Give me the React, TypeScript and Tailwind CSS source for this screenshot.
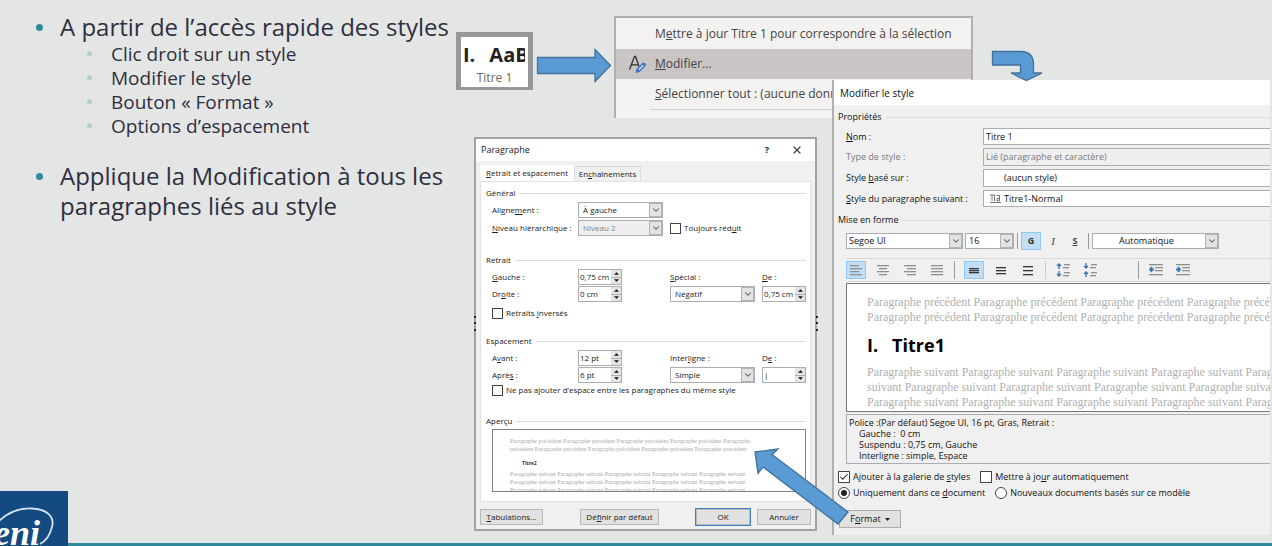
import React, { useState } from "react";
import { Check, ChevronDown, X } from "lucide-react";

const sans = "font-['Open_Sans','Noto_Sans',sans-serif]";

function BlockArrow({ className, viewBox, d }: { className: string; viewBox: string; d: string }) {
  return (
    <svg aria-hidden="true" className={className} viewBox={viewBox}>
      <path d={d} fill="#5b9bd5" stroke="#41719c" strokeWidth="1.3" />
    </svg>
  );
}

function Group({ title, children, className = "" }: { title: string; children?: React.ReactNode; className?: string }) {
  return (
    <section className={className}>
      <div className="flex h-4 items-center gap-1">
        <h3>{title}</h3>
        <span className="h-px flex-1 bg-[#dcdcdc]" />
      </div>
      {children}
    </section>
  );
}

function Select({
  id,
  value,
  label,
  disabled,
  className = "",
  pad = "pl-1",
}: {
  id: string;
  value: string;
  label?: string;
  disabled?: boolean;
  className?: string;
  pad?: string;
}) {
  return (
    <span className={`relative flex h-4 border border-[#abadb3] ${disabled ? "bg-[#efefef] text-[#838383]" : "bg-white"} ${className}`}>
      <select id={id} aria-label={label} disabled={disabled} defaultValue={value} className={`w-full appearance-none bg-transparent ${pad}`}>
        <option>{value}</option>
      </select>
      <span className="pointer-events-none absolute inset-y-0 right-0 flex w-[13px] items-center justify-center border border-[#b4b4b4] bg-[#e3e3e3]">
        <ChevronDown className="size-[10px] text-[#555]" strokeWidth={2.5} />
      </span>
    </span>
  );
}

function Spinner({ id, value }: { id: string; value: string }) {
  return (
    <span className="flex h-4 w-11 border border-[#abadb3] bg-white">
      <input id={id} defaultValue={value} className="w-full min-w-0 flex-1 bg-transparent pl-px" />
      <span className="flex w-[10px] flex-col bg-[#e3e3e3]">
        <button type="button" aria-label="+" className="flex flex-1 items-center justify-center border-b border-[#abadb3]">
          <svg className="h-[3px] w-[5px]" viewBox="0 0 6 3"><path d="M0 3 3 0l3 3z" fill="#111" /></svg>
        </button>
        <button type="button" aria-label="-" className="flex flex-1 items-center justify-center">
          <svg className="h-[3px] w-[5px]" viewBox="0 0 6 3"><path d="M0 0h6L3 3z" fill="#111" /></svg>
        </button>
      </span>
    </span>
  );
}

function Tick({ children, type = "checkbox", name, checked = false, size = "size-[11px]" }: {
  children: React.ReactNode;
  type?: "checkbox" | "radio";
  name?: string;
  checked?: boolean;
  size?: string;
}) {
  const round = type === "radio";
  return (
    <label className="flex items-center gap-[3px] whitespace-nowrap">
      <span className={`relative flex shrink-0 items-center justify-center ${size}`}>
        <input
          type={type}
          name={name}
          defaultChecked={checked}
          className={`peer absolute inset-0 size-full appearance-none border border-[#444] bg-white ${round ? "rounded-full" : ""}`}
        />
        {round ? (
          <span className="pointer-events-none relative hidden size-[6px] rounded-full bg-[#222] peer-checked:block" />
        ) : (
          <Check className="pointer-events-none relative hidden size-[10px] text-[#222] peer-checked:block" strokeWidth={2.5} />
        )}
      </span>
      <span>{children}</span>
    </label>
  );
}

function SlideText() {
  return (
    <ul className="w-[450px] pt-3 pl-[60px] text-2xl/[30px] text-[#2f2f40]">
      <li className="relative whitespace-nowrap">
        <span className="absolute -left-6 top-3 size-[7px] rounded-full bg-[#2f8a9c]" />
        A partir de l’accès rapide des styles
        <ul className="pl-[51px] text-[19px]/6">
          {["Clic droit sur un style", "Modifier le style", "Bouton « Format »", "Options d’espacement"].map((t) => (
            <li key={t} className="relative">
              <span className="absolute -left-6 top-[9px] size-[5px] rounded-full bg-[#a9d0cf]" />
              {t}
            </li>
          ))}
        </ul>
      </li>
      <li className="relative mt-[23px] whitespace-nowrap">
        <span className="absolute -left-6 top-3 size-[7px] rounded-full bg-[#2f8a9c]" />
        Applique la Modification à tous les
        <br />
        paragraphes liés au style
      </li>
    </ul>
  );
}

function StyleTile() {
  return (
    <button type="button" className="absolute left-[456px] top-8 flex h-[58px] w-[77px] flex-col border-[5px] border-b-[3px] border-[#979899] bg-white pl-[2px] text-left">
      <span className="mt-1 flex w-[62px] gap-[14px] overflow-hidden text-[20px]/[28px] font-bold text-[#222]">
        <span>I.</span>
        <span>AaB</span>
      </span>
      <span className="w-full pr-[2px] text-center text-xs/[18px] text-[#666]">Titre 1</span>
    </button>
  );
}

function ContextMenu() {
  return (
    <div role="menu" className="absolute left-[614px] top-4 w-[359px] border-2 border-b-0 border-[#b1b0af] bg-[#f3f2f1] text-xs text-[#444]">
      <button role="menuitem" type="button" className="flex h-[31px] w-full items-center pl-[39px] whitespace-nowrap">
        <span>M<u>e</u>ttre à jour Titre 1 pour correspondre à la sélection</span>
      </button>
      <button role="menuitem" type="button" className="flex h-[30px] w-full items-center bg-[#c8c5c4] pl-3 whitespace-nowrap">
        <svg aria-hidden="true" className="mr-2 size-[19px]" viewBox="0 0 19 19">
          <path d="M1.5 14.500 6.500 1.500h1l3.500 10M3.400 9.800h6.400" fill="none" stroke="#333" strokeWidth="1.3" />
          <path d="m7.500 18 1-4 6.500-6.500q3 0 3 3L11.500 17z" fill="#3f74c4" />
          <path d="m10.800 14.700 4.500-4.500" stroke="#cfe0f7" strokeWidth="1.400" />
        </svg>
        <span><u>M</u>odifier...</span>
      </button>
      <button role="menuitem" type="button" className="flex h-[30px] w-full items-center pl-[39px] whitespace-nowrap">
        <span><u>S</u>électionner tout : (aucune donn</span>
      </button>
      <div className="ml-[34px] h-[9px] border-t border-[#d0cfce]" />
    </div>
  );
}

function FormRow({ label, id, children }: { label: React.ReactNode; id: string; children: React.ReactNode }) {
  return (
    <div className="flex items-center">
      <label htmlFor={id} className="w-[86px] whitespace-nowrap">{label}</label>
      {children}
    </div>
  );
}

function ParagraphDialog() {
  return (
    <div role="dialog" aria-label="Paragraphe" className="absolute left-[474px] top-[137px] w-[343px] border-2 border-[#a0a1a1] bg-[#f0f0f0] text-[8px]/[12px] text-[#222]">
      <header className="flex h-[22px] items-center bg-white pl-[5px] pr-3 text-[9px]">
        <h2 className="flex-1">Paragraphe</h2>
        <button type="button" className="mr-[22px] font-bold">?</button>
        <button type="button" aria-label="Fermer"><X className="size-3 text-[#444]" strokeWidth={2.5} /></button>
      </header>
      <div className="px-1 pb-1">
        <div role="tablist" className="flex h-5 items-end pt-1">
          <button role="tab" aria-selected="true" type="button" className="h-4 w-[94px] bg-white text-center whitespace-nowrap"><u>R</u>etrait et espacement</button>
          <button role="tab" aria-selected="false" type="button" className="h-[15px] w-[67px] border border-b-0 border-[#dcdcdc] text-center leading-3 whitespace-nowrap">En<u>c</u>haînements</button>
        </div>
        <div className="border border-[#e2e2e2] bg-white pt-[3px] pr-1 pb-[9px] pl-[5px]">
          <Group title="Général">
            <div className="flex flex-col gap-[2px] pt-px pl-[6px]">
              <FormRow id="align" label={<>Aligne<u>m</u>ent :</>}><Select id="align" value="À gauche" className="w-[85px]" /></FormRow>
              <FormRow id="niv" label={<><u>N</u>iveau hiérarchique :</>}>
                <Select id="niv" value="Niveau 2" disabled className="mr-[7px] w-[85px]" />
                <Tick>Toujours réd<u>u</u>it</Tick>
              </FormRow>
            </div>
          </Group>
          <Group title="Retrait" className="mt-4">
            <div className="grid grid-cols-[178px_92px_43px] gap-y-px pt-px pl-[6px]">
              <FormRow id="gau" label={<><u>G</u>auche :</>}><Spinner id="gau" value="0,75 cm" /></FormRow>
              <label htmlFor="spe" className="self-center"><u>S</u>pécial :</label>
              <label htmlFor="de1" className="self-center"><u>D</u>e :</label>
              <FormRow id="dro" label={<>Dr<u>o</u>ite :</>}><Spinner id="dro" value="0 cm" /></FormRow>
              <Select id="spe" value="Négatif" className="w-[85px]" />
              <Spinner id="de1" value="0,75 cm" />
            </div>
            <div className="mt-[5px] pl-[6px]"><Tick>Retraits <u>i</u>nversés</Tick></div>
          </Group>
          <Group title="Espacement" className="mt-[14px]">
            <div className="grid grid-cols-[178px_92px_43px] gap-y-px pt-px pl-[6px]">
              <FormRow id="ava" label={<>A<u>v</u>ant :</>}><Spinner id="ava" value="12 pt" /></FormRow>
              <label htmlFor="int" className="self-center">Inter<u>l</u>igne :</label>
              <label htmlFor="de2" className="self-center">D<u>e</u> :</label>
              <FormRow id="apr" label={<>Aprè<u>s</u> :</>}><Spinner id="apr" value="6 pt" /></FormRow>
              <Select id="int" value="Simple" className="w-[85px]" />
              <Spinner id="de2" value="|" />
            </div>
            <div className="mt-px pl-[6px]"><Tick>Ne pas ajouter d’espace entre les paragraphes du même style</Tick></div>
          </Group>
          <Group title="Aperçu" className="mt-[17px]">
            <div className="ml-[6px] h-[63px] overflow-hidden border border-[#808080] pt-[7px] pl-[17px] font-['Liberation_Serif',serif] text-[6px]/[8px] whitespace-nowrap text-[#a8a8a8]">
              <p>Paragraphe précédent Paragraphe précédent Paragraphe précédent Paragraphe précédent Paragraphe</p>
              <p>précédent Paragraphe précédent Paragraphe précédent Paragraphe précédent Paragraphe précédent</p>
              <p className={`mt-[6px] mb-[3px] pl-3 font-bold text-[#333] ${sans} text-[5px]/[8px]`}>Titre2</p>
              {[0, 1, 2].map((n) => (
                <p key={n}>Paragraphe suivant Paragraphe suivant Paragraphe suivant Paragraphe suivant Paragraphe suivant</p>
              ))}
            </div>
          </Group>
        </div>
        <footer className="mt-[7px] flex *:h-4 *:border *:border-[#b9b9b9] *:bg-[#e1e1e1] *:leading-3">
          <button type="button" className="w-[63px]"><u>T</u>abulations...</button>
          <button type="button" className="ml-[37px] w-[79px]">Dé<u>f</u>inir par défaut</button>
          <button type="button" className="ml-auto w-[54px] outline outline-[#3c7fc8]">OK</button>
          <button type="button" className="ml-[7px] w-[54px]">Annuler</button>
        </footer>
      </div>
    </div>
  );
}

function ResizeDots({ className }: { className: string }) {
  return (
    <svg aria-hidden="true" className={className} viewBox="0 0 3 18">
      <path d="M0 2h2M0 8h2M0 15h2" stroke="#222" strokeWidth="2" />
    </svg>
  );
}

type Bar = [number, number, number];

function Lines({ bars, color, children }: { bars: Bar[]; color: string; children?: React.ReactNode }) {
  return (
    <svg aria-hidden="true" className="h-4 w-[14px]" viewBox="0 0 14 16">
      {bars.map(([x, y, w]) => (
        <rect key={`${x}-${y}`} x={x} y={y} width={w} height="1.3" fill={color} />
      ))}
      {children}
    </svg>
  );
}

function IconButton({ label, active, className = "", children }: { label: string; active?: boolean; className?: string; children: React.ReactNode }) {
  return (
    <button
      type="button"
      aria-label={label}
      className={`flex h-[18px] w-5 shrink-0 items-center justify-center border ${active ? "border-[#90c8f6] bg-[#c2def5]" : "border-transparent"} ${className}`}
    >
      {children}
    </button>
  );
}

const grey = "#8f8f8f";
const dark = "#333";
const blue = "#3573b5";

function FieldRow({ id, label, muted, children }: { id: string; label: React.ReactNode; muted?: boolean; children: React.ReactNode }) {
  return (
    <div className={`flex items-center ${muted ? "text-[#7b7b7b]" : ""}`}>
      <label htmlFor={id} className="w-[137px] shrink-0 whitespace-nowrap">{label}</label>
      {children}
    </div>
  );
}

const box = "flex-1 min-w-0 border border-r-0 border-[#abadb3]";

function StyleDialog() {
  const [name, setName] = useState("Titre 1");
  return (
    <div role="dialog" aria-label="Modifier le style" className="absolute left-[832px] right-[2px] top-20 overflow-hidden border-l-2 border-[#b0b0b0] bg-[#f0f0f0] pb-[7px] text-[9px]/[14px] font-medium text-[#111]">
      <header className="flex h-[25px] items-center bg-white pl-[6px] text-[10px] font-normal"><h2>Modifier le style</h2></header>
      <Group title="Propriétés" className="pt-1 pl-1">
        <div className="flex flex-col gap-[3px] pt-[3px] pl-2">
          <FieldRow id="nom" label={<><u>N</u>om :</>}>
            <input id="nom" value={name} onChange={(e) => setName(e.target.value)} className={`${box} h-[17px] bg-white pl-[2px]`} />
          </FieldRow>
          <FieldRow id="typ" label="Type de style :" muted>
            <select id="typ" disabled className={`${box} h-[18px] appearance-none bg-[#efefef] pl-[2px]`}><option>Lié (paragraphe et caractère)</option></select>
          </FieldRow>
          <FieldRow id="bas" label={<>Style <u>b</u>asé sur :</>}>
            <select id="bas" className={`${box} h-[18px] appearance-none bg-white pl-5`}><option>(aucun style)</option></select>
          </FieldRow>
          <FieldRow id="sui" label={<><u>S</u>tyle du paragraphe suivant :</>}>
            <span className={`${box} flex h-[17px] items-center bg-white pl-[6px]`}>
              <svg aria-hidden="true" className="mr-[3px] h-[9px] w-[11px]" viewBox="0 0 11 9">
                <path d="M0 1h5M2 1v6M4.500 1v6M0 8.500h11M9.500 1v6M7 4.500h2.500v2.500H7zM6.500 1.500h3" fill="none" stroke="#777" />
              </svg>
              <select id="sui" className="min-w-0 flex-1 appearance-none bg-transparent"><option>Titre1-Normal</option></select>
            </span>
          </FieldRow>
        </div>
      </Group>
      <Group title="Mise en forme" className="mt-[5px] pl-1" />
      <div className="pl-3">
        <div className="mt-1 flex h-[18px] items-center">
          <Select id="font" label="Police" value="Segoe UI" className="w-[117px]" pad="pl-[2px]" />
          <Select id="size" label="Taille" value="16" className="ml-[2px] w-[49px]" pad="pl-[3px]" />
          <span className="mx-[3px] h-4 w-px bg-[#999]" />
          <IconButton label="Gras" active><b className="text-[#333]">G</b></IconButton>
          <IconButton label="Italique" className="ml-[2px]"><i className="font-['Liberation_Serif',serif] text-[11px] text-[#444]">I</i></IconButton>
          <IconButton label="Souligné" className="ml-[2px]"><b className="text-[#444] underline">S</b></IconButton>
          <span className="mx-[3px] h-4 w-px bg-[#999]" />
          <Select id="color" label="Couleur" value="Automatique" className="w-[127px]" pad="pl-[26px]" />
        </div>
        <div className="mt-2 flex h-6 items-center gap-[7px] border-y border-[#d9d9d9]">
          <IconButton label="Gauche" active><Lines color={grey} bars={[[1, 3, 9], [1, 6, 12], [1, 9, 9], [1, 12, 12]]} /></IconButton>
          <IconButton label="Centré"><Lines color={grey} bars={[[1, 3, 12], [3, 6, 8], [1, 9, 12], [3, 12, 8]]} /></IconButton>
          <IconButton label="Droite"><Lines color={grey} bars={[[1, 3, 12], [4, 6, 9], [1, 9, 12], [4, 12, 9]]} /></IconButton>
          <IconButton label="Justifié"><Lines color={grey} bars={[[1, 3, 12], [1, 6, 12], [1, 9, 12], [1, 12, 12]]} /></IconButton>
          <span className="mr-[2px] h-[18px] w-px bg-[#999]" />
          <IconButton label="Simple" active><Lines color={dark} bars={[[2, 6, 10], [2, 8, 10], [2, 10, 10]]} /></IconButton>
          <IconButton label="1,5 ligne"><Lines color={dark} bars={[[2, 5, 10], [2, 8, 10], [2, 11, 10]]} /></IconButton>
          <IconButton label="Double"><Lines color={dark} bars={[[2, 4, 10], [2, 8, 10], [2, 12, 10]]} /></IconButton>
          <span className="h-[18px] w-px bg-[#ccc]" />
          <IconButton label="Augmenter l’espacement">
            <Lines color={grey} bars={[[8, 2, 6], [7, 5, 6], [8, 10, 6], [7, 13, 6]]}>
              <path d="M3 7V2M1 4l2-2 2 2M3 9v5M1 12l2 2 2-2" fill="none" stroke={blue} strokeWidth="1.3" />
            </Lines>
          </IconButton>
          <IconButton label="Réduire l’espacement">
            <Lines color={grey} bars={[[8, 2, 6], [7, 5, 6], [8, 10, 6], [7, 13, 6]]}>
              <path d="M3 1v5M1 4l2 2 2-2M3 15v-5M1 12l2-2 2 2" fill="none" stroke={blue} strokeWidth="1.3" />
            </Lines>
          </IconButton>
          <span className="ml-[31px] h-[18px] w-px bg-[#999]" />
          <IconButton label="Diminuer le retrait">
            <Lines color={grey} bars={[[0, 2, 14], [6, 5, 8], [6, 8, 8], [0, 12, 14]]}>
              <path d="M5 7.500H1M3 5 1 7.500 3 10" fill="none" stroke={blue} strokeWidth="1.8" />
            </Lines>
          </IconButton>
          <IconButton label="Augmenter le retrait">
            <Lines color={grey} bars={[[0, 2, 14], [6, 5, 8], [6, 8, 8], [0, 12, 14]]}>
              <path d="M0 7.500h4M2 5l2 2.500L2 10" fill="none" stroke={blue} strokeWidth="1.8" />
            </Lines>
          </IconButton>
        </div>
        <div className="mt-px h-[129px] overflow-hidden border border-r-0 border-[#777] bg-white pt-[11px] pl-5 font-['Liberation_Serif',serif] text-xs/[15px] font-normal whitespace-nowrap text-[#b0b0b0]">
          <p>Paragraphe précédent Paragraphe précédent Paragraphe précédent Paragraphe précédent</p>
          <p>Paragraphe précédent Paragraphe précédent Paragraphe précédent Paragraphe précédent</p>
          <p className={`my-[7px] flex gap-[14px] text-lg/[26px] font-bold text-black ${sans}`}><span>I.</span><span>Titre1</span></p>
          <p>Paragraphe suivant Paragraphe suivant Paragraphe suivant Paragraphe suivant Paragraphe</p>
          <p>suivant Paragraphe suivant Paragraphe suivant Paragraphe suivant Paragraphe suivant Paragraphe</p>
          <p>Paragraphe suivant Paragraphe suivant Paragraphe suivant Paragraphe suivant Paragraphe</p>
        </div>
        <div className="mt-[2px] border border-r-0 border-[#abadb3] py-[2px] pl-[2px] leading-[11px]">
          <p>Police :(Par défaut) Segoe UI, 16 pt, Gras, Retrait :</p>
          <p className="pl-[10px]">Gauche :&nbsp; 0 cm</p>
          <p className="pl-[10px]">Suspendu : 0,75 cm, Gauche</p>
          <p className="pl-[10px]">Interligne : simple, Espace</p>
        </div>
      </div>
      <div className="mt-[6px] flex flex-col gap-[2px] pl-1">
        <div className="flex gap-[10px]">
          <Tick checked size="size-3">Ajouter à la galerie de <u>s</u>tyles</Tick>
          <Tick size="size-3">Mettre à jo<u>u</u>r automatiquement</Tick>
        </div>
        <div className="flex gap-[10px]">
          <Tick type="radio" name="scope" checked size="size-3">Uniquement dans ce <u>d</u>ocument</Tick>
          <Tick type="radio" name="scope" size="size-3">Nouveaux documents basés sur ce modèle</Tick>
        </div>
      </div>
      <button type="button" className="mt-[10px] ml-[5px] flex h-[18px] w-[62px] items-center justify-center gap-1 border border-[#adadad] bg-[#e1e1e1]">
        <span>F<u>o</u>rmat</span>
        <svg aria-hidden="true" className="h-[3px] w-[5px]" viewBox="0 0 5 3"><path d="M0 0h5L2.500 3z" fill="#222" /></svg>
      </button>
    </div>
  );
}

function Logo() {
  return (
    <svg role="img" aria-label="eni" className="absolute bottom-0 left-0 h-[55px] w-[68px] bg-[#134a80]" viewBox="0 0 68 55">
      <path d="M-2 31C8 21 20 17 32 17.500C46 18 55 25 52 36C50 44 46 50 40 53" fill="none" stroke="#d4e3f0" strokeWidth="1.8" />
      <text x="-6" y="54" fill="#fff" fontSize="36" fontStyle="italic" fontWeight="bold" fontFamily="Liberation Serif, serif">eni</text>
    </svg>
  );
}

export default function App() {
  return (
    <main className={`relative flex min-h-screen flex-col overflow-hidden bg-[#e4e6e5] ${sans}`}>
      <div className="flex-1">
        <SlideText />
        <StyleTile />
        <ContextMenu />
        <ParagraphDialog />
        <ResizeDots className="absolute left-[474px] top-[315px] h-[18px] w-[3px]" />
        <ResizeDots className="absolute left-[816px] top-[315px] h-[18px] w-[3px]" />
        <StyleDialog />
        <BlockArrow className="absolute left-[536px] top-12 h-[35px] w-[76px]" viewBox="536 48 76 35" d="M537.500 57.500H595V49.500L610.500 65.500 595 81.500V73.500H537.500z" />
        <BlockArrow className="absolute left-[990px] top-[50px] h-8 w-[56px]" viewBox="990 50 56 32" d="M992.500 51.500H1021Q1033.500 52 1033.500 64V73H1042L1026.500 80.500 1011 73H1020.500V65H992.500z" />
        <BlockArrow className="absolute left-[752px] top-[446px] h-20 w-[98px]" viewBox="752 446 98 80" d="M755 452 778 449 772 454.500 848 512 838 524 763 467 758 473.500z" />
      </div>
      <div className="h-[3px] bg-[#2f8a9c]" />
      <Logo />
    </main>
  );
}
